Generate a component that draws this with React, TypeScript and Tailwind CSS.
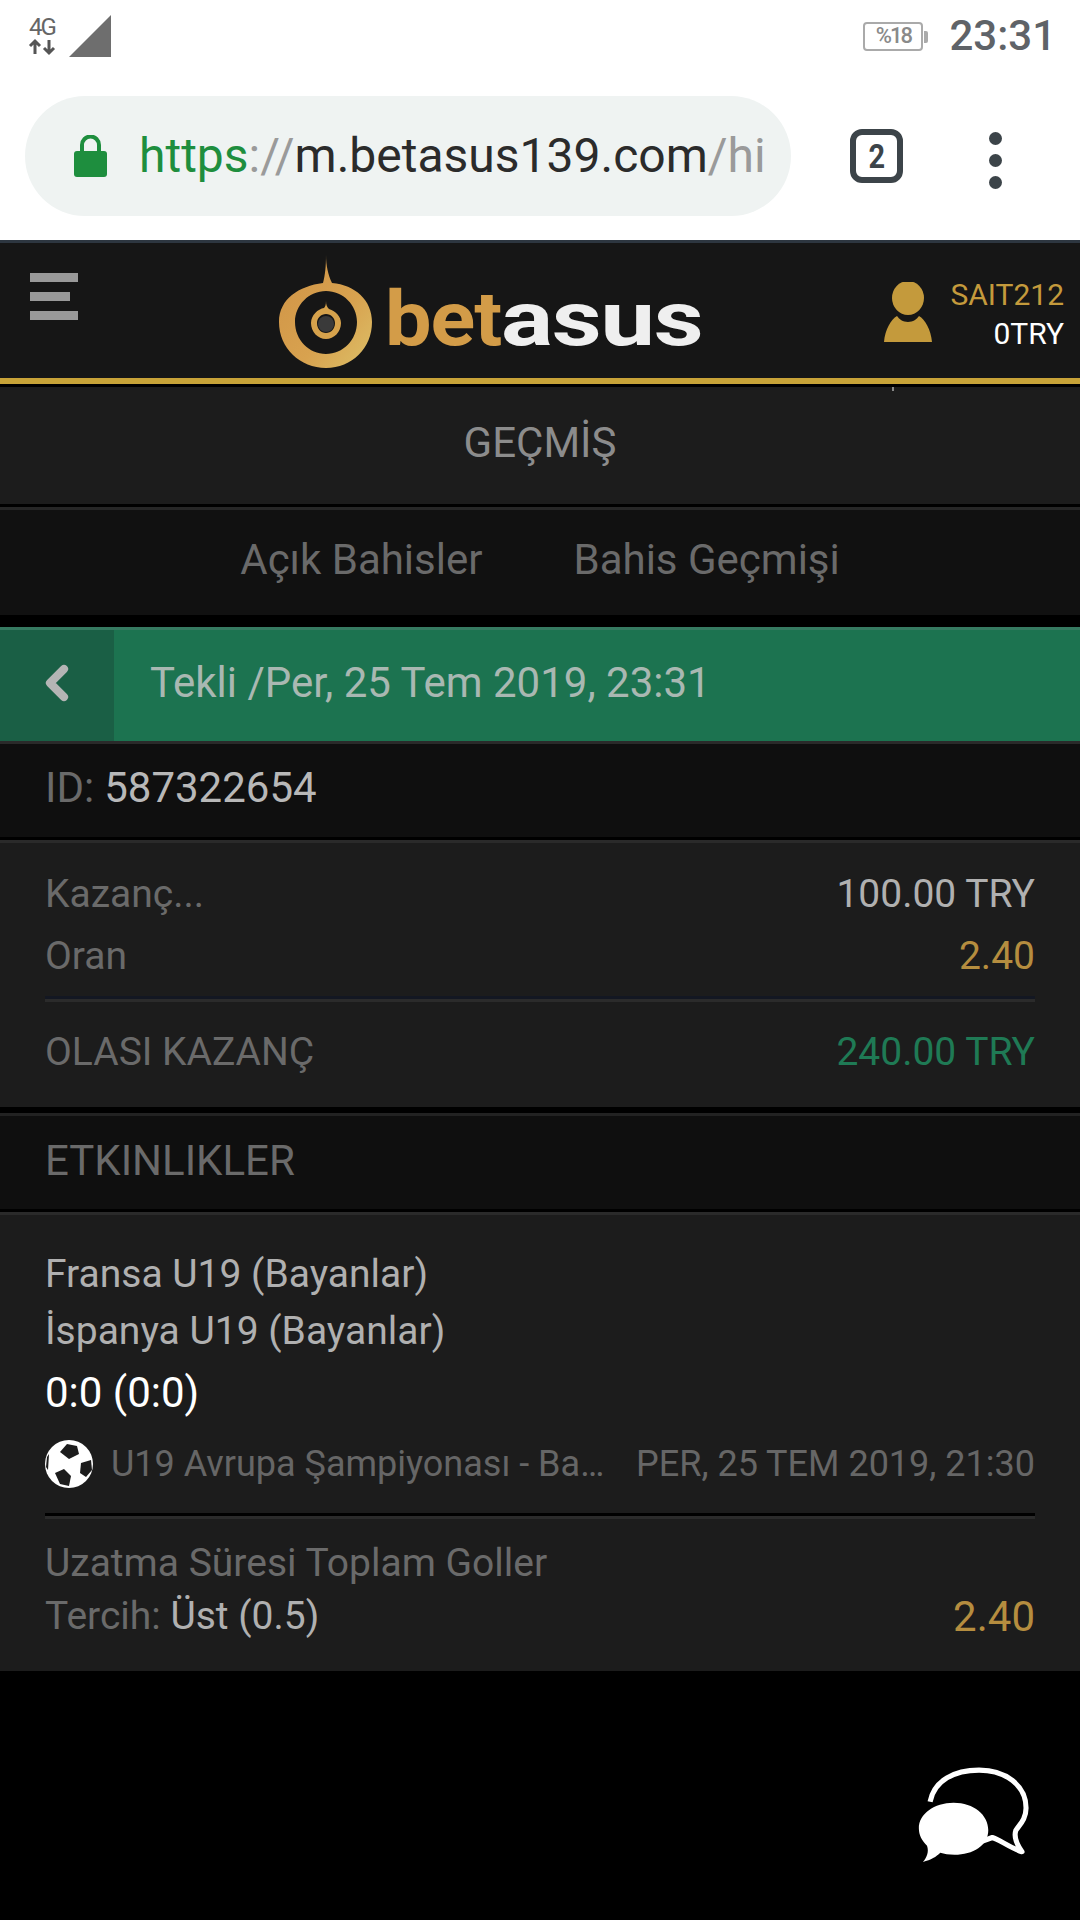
import React from 'react';
import { ChevronLeft } from 'lucide-react';

const StatusBar = () => (
  <div className="h-[96px] bg-white flex items-start pl-[27px] pr-[24px] pt-[15px]">
    <div className="w-[30px] flex flex-col items-center text-[#666]">
      <span className="text-[24px] leading-[24px] tracking-[-2px]">4G</span>
      <svg width="30" height="18" viewBox="0 0 30 18" className="-mt-[1px]">
        <path d="M8 16V4M3 8l5-5 5 5" fill="none" stroke="#555" strokeWidth="3" />
        <path d="M22 2v12M17 10l5 5 5-5" fill="none" stroke="#555" strokeWidth="3" />
      </svg>
    </div>
    <svg width="42" height="42" viewBox="0 0 42 42" className="ml-[12px]">
      <path d="M42 0V42H0Z" fill="#6e6e6e" />
    </svg>
    <div className="ml-auto flex items-center mt-[2px]">
      <div className="relative w-[60px] h-[29px] border-[2px] border-[#aaa] rounded-[4px] flex items-center justify-center text-[22px] font-medium text-[#8a8a8a] leading-none tracking-[-2px]">
        %18
        <span className="absolute -right-[7px] top-[7px] w-[4px] h-[12px] bg-[#aaa] rounded-r-[2px]" />
      </div>
      <span className="ml-[26px] text-[42px] leading-[38px] font-medium text-[#5f6368]">23:31</span>
    </div>
  </div>
);

const UrlBar = () => (
  <div className="h-[144px] bg-white flex items-start pl-[25px]">
    <div className="w-[766px] h-[120px] rounded-[60px] bg-[#eff3f2] flex items-center pl-[49px] overflow-hidden">
      <svg width="33" height="42" viewBox="0 0 33 42">
        <path d="M8 18v-8a8.500 8.500 0 0 1 17 0v8" fill="none" stroke="#1e8e3e" strokeWidth="4" />
        <rect x="0" y="16" width="33" height="26" rx="3" fill="#1e8e3e" />
      </svg>
      <span className="ml-[32px] w-[625px] whitespace-nowrap text-[48px] leading-[56px] text-[#2b2b2b]">
        <span className="text-[#1e8e3e]">https</span>
        <span className="text-[#9a9a9a]">://</span>
        m.betasus139.com
        <span className="text-[#9a9a9a]">/hi</span>
      </span>
    </div>
    <div className="ml-[59px] mt-[33px] w-[53px] h-[54px] border-[6px] border-[#3c4449] rounded-[12px] flex items-center justify-center text-[#3c4449] text-[34px] font-bold leading-none">
      <span className="scale-x-[0.85]">2</span>
    </div>
    <div className="ml-[86px] mt-[36px] flex flex-col gap-[9px]">
      <span className="w-[13px] h-[13px] rounded-full bg-[#3c4449]" />
      <span className="w-[13px] h-[13px] rounded-full bg-[#3c4449]" />
      <span className="w-[13px] h-[13px] rounded-full bg-[#3c4449]" />
    </div>
  </div>
);

const Logo = () => (
  <div className="flex items-start">
    <svg width="94" height="113" viewBox="0 0 94 113">
      <defs>
        <linearGradient id="ringGold" x1="0" y1="0" x2="1" y2="1">
          <stop offset="0" stopColor="#cf9346" />
          <stop offset="0.6" stopColor="#d8a24f" />
          <stop offset="1" stopColor="#dcc068" />
        </linearGradient>
      </defs>
      <path
        fillRule="evenodd"
        fill="url(#ringGold)"
        d="M47 0C47 12 46 20 44 28C20 31 0 44 0 67C0 93 21 113 47 113C73 113 93 93 93 67C93 45 76 30 53 28C49 20 47 10 47 0ZM47 36C64 36 78 50 78 67C78 85 64 99 47 99C30 99 16 85 16 67C16 50 30 36 47 36Z"
      />
      <path
        fillRule="evenodd"
        fill="#d6a24c"
        d="M47 46C47 50 48 52 50 54C57 56 62 62 62 68C62 77 55 84 47 84C39 84 32 77 32 68C32 60 39 54 45 53C46 52 47 50 47 46ZM47 59C42 59 38 63 38 68C38 74 42 78 47 78C52 78 56 74 56 68C56 63 52 59 47 59Z"
      />
      <circle cx="47" cy="69" r="8" fill="#3a3a3a" />
    </svg>
    <div className="ml-[12px] mt-[29px] h-[70px] flex items-end font-bold text-[76px] leading-[70px] tracking-[-1px]">
      <span className="block w-[116px] origin-left scale-x-[1.09] text-[#d39c48]">bet</span>
      <span className="block w-[193px] origin-left scale-x-[1.28] text-[#efefef]">asus</span>
    </div>
  </div>
);

const Header = () => (
  <div className="border-t-[3px] border-[#2d3640] bg-[#161616] h-[138px] flex items-start relative">
    <div className="ml-[30px] mt-[30px] w-[48px] flex flex-col gap-[10px]">
      <span className="block w-[48px] h-[9px] bg-[#999]" />
      <span className="block w-[40px] h-[9px] bg-[#999]" />
      <span className="block w-[48px] h-[9px] bg-[#999]" />
    </div>
    <div className="ml-[201px] mt-[12px]">
      <Logo />
    </div>
    <div className="ml-auto mr-[16px] mt-[33px] flex items-start">
      <svg width="48" height="60" viewBox="0 0 48 60" className="mt-[6px] mr-[18px]">
        <ellipse cx="24" cy="16" rx="16" ry="17" fill="#c49a3c" />
        <path d="M13 34C15 37 19 40 24 40C29 40 33 37 35 34C41 37 47 48 48 60H0C1 48 7 37 13 34Z" fill="#c49a3c" />
      </svg>
      <div className="flex flex-col items-end">
        <span className="text-[30px] leading-[38px] text-[#c49a3c]">SAIT212</span>
        <span className="text-[30px] leading-[40px] text-white">0TRY</span>
      </div>
    </div>
  </div>
);

const Row = ({ left, right }: { left: React.ReactNode; right: React.ReactNode }) => (
  <div className="flex justify-between items-center">
    {left}
    {right}
  </div>
);

const SoccerBall = () => (
  <svg width="48" height="48" viewBox="0 0 48 48">
    <circle cx="24" cy="24" r="24" fill="#fff" />
    <path d="M15 12L22 4L32 6L34 14L24 19Z" fill="#1c1c1c" />
    <path d="M36 23L46 20L47 30L41 37L35 33Z" fill="#1c1c1c" />
    <path d="M10 33L19 29L26 36L24 46L15 44Z" fill="#1c1c1c" />
    <path d="M2 17L4 14L3 30L1 27Z" fill="#1c1c1c" />
  </svg>
);

const ChatIcon = () => (
  <svg width="116" height="98" viewBox="0 0 112 96">
    <path
      d="M12 36C16 15 36 5 60 5C86 5 106 20 106 42C106 53 100 58 96 64C94 70 97 78 102 85C90 81 80 73 73 71L62 75"
      fill="none"
      stroke="#fff"
      strokeWidth="5"
      strokeLinejoin="round"
    />
    <path
      d="M35 37C55 37 69 49 69 64C69 79 54 88 36 88C30 88 26 87 22 86C18 90 13 93 5 95C9 90 11 85 9 79C4 74 1 69 1 62C1 48 16 37 35 37Z"
      fill="#fff"
    />
  </svg>
);

const App: React.FC = () => {
  return (
    <div className="w-[1080px] h-[1920px] bg-black font-['Roboto',sans-serif] overflow-hidden relative">
      <StatusBar />
      <UrlBar />
      <Header />
      <div className="h-[6px] bg-[#c8a338]" />
      <div className="h-[3px] bg-black" />

      <div className="relative h-[117px] pb-[7px] bg-[#1c1c1c] flex items-center justify-center text-[42px] text-[#8c8c8c]">
        <span className="absolute left-[892px] top-0 w-[2px] h-[4px] bg-[#888]" />
        GEÇMİŞ
      </div>
      <div className="h-[3px] bg-black" />
      <div className="h-[108px] pb-[6px] border-t-[3px] border-[#262626] bg-[#111111] flex items-center justify-center gap-[91px] text-[42px] text-[#6a6a6a]">
        <span>Açık Bahisler</span>
        <span>Bahis Geçmişi</span>
      </div>
      <div className="h-[12px] bg-black" />

      <div className="h-[114px] border-t-[3px] border-[#367a61] bg-[#1c7350] flex items-stretch">
        <div className="w-[114px] bg-[#1a5f45] flex items-center pl-[29px] pb-[5px]">
          <ChevronLeft size={56} strokeWidth={3.5} className="text-[#b5b5b5]" />
        </div>
        <div className="pl-[36px] pb-[6px] flex items-center text-[42px] text-[#a9b8b2]">
          Tekli /Per, 25 Tem 2019, 23:31
        </div>
      </div>

      <div className="h-[96px] pb-[6px] border-t-[3px] border-[#2a2a2a] bg-[#0f0f0f] flex items-center pl-[45px] text-[42px] text-[#6a6a6a]">
        ID:<span className="ml-[10px] text-[#b8b8b8]">587322654</span>
      </div>
      <div className="h-[3px] bg-black" />

      <div className="h-[267px] border-t-[3px] border-[#2a2a2a] bg-[#1c1c1c] px-[45px] pt-[30px] text-[39px] text-[#6a6a6a]">
        <div className="h-[42px] leading-[42px]">
          <Row left={<span>Kazanç...</span>} right={<span className="text-[#b0b0b0]">100.00 TRY</span>} />
        </div>
        <div className="h-[42px] leading-[42px] mt-[20px]">
          <Row left={<span>Oran</span>} right={<span className="text-[#b58d3f]">2.40</span>} />
        </div>
        <div className="mt-[19px] h-[6px] border-t-[3px] border-[#131722] border-b-[3px] border-b-[#2b2b2b]" />
        <div className="h-[42px] leading-[42px] mt-[29px]">
          <Row left={<span>OLASI KAZANÇ</span>} right={<span className="text-[#1f7a55]">240.00 TRY</span>} />
        </div>
      </div>
      <div className="h-[6px] bg-black" />

      <div className="h-[96px] pb-[5px] border-t-[3px] border-[#222] bg-[#0f0f0f] flex items-center pl-[45px] text-[42px] text-[#6a6a6a]">
        ETKINLIKLER
      </div>
      <div className="h-[3px] bg-black" />

      <div className="h-[459px] border-t-[3px] border-[#2a2a2a] bg-[#1c1c1c] px-[45px] pt-[37px]">
        <div className="text-[39px] leading-[44px] text-[#b0b0b0]">Fransa U19 (Bayanlar)</div>
        <div className="text-[39px] leading-[44px] mt-[13px] text-[#b0b0b0]">İspanya U19 (Bayanlar)</div>
        <div className="text-[42px] leading-[48px] mt-[16px] text-white">0:0 (0:0)</div>
        <div className="flex items-center mt-[23px] h-[48px] text-[36px] text-[#666]">
          <SoccerBall />
          <span className="ml-[18px] whitespace-nowrap">U19 Avrupa Şampiyonası - Ba…</span>
          <span className="ml-auto whitespace-nowrap">PER, 25 TEM 2019, 21:30</span>
        </div>
        <div className="mt-[25px] h-[6px] border-t-[3px] border-black border-b-[3px] border-b-[#2b2b2b]" />
        <div className="mt-[23px] text-[39px] leading-[42px] text-[#6a6a6a]">Uzatma Süresi Toplam Goller</div>
        <div className="mt-[10px] flex justify-between items-center h-[44px]">
          <span className="text-[39px] text-[#6a6a6a]">
            Tercih: <span className="text-[#b0b0b0]">Üst (0.5)</span>
          </span>
          <span className="text-[42px] text-[#b58d3f]">2.40</span>
        </div>
      </div>

      <div className="absolute left-[917px] top-[1765px]">
        <ChatIcon />
      </div>
    </div>
  );
};

export default App;
